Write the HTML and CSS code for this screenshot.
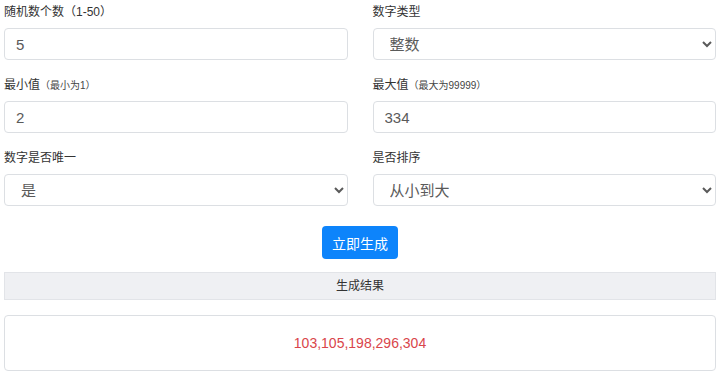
FILE: index.html
```html
<!DOCTYPE html>
<html lang="zh-CN">
<head>
  <meta charset="UTF-8" />
  <meta name="viewport" content="width=device-width, initial-scale=1" />
  <title>随机数生成器</title>
  <link rel="stylesheet" href="styles.css">
</head>
<body>
  <div class="page">
    <form id="randomForm" class="form-grid">
      <div class="field">
        <label for="countInput">随机数个数（1-50）</label>
        <input type="text" id="countInput" value="5" />
      </div>
      <div class="field">
        <label for="typeSelect">数字类型</label>
        <select id="typeSelect">
          <option>整数</option>
          <option>小数</option>
        </select>
      </div>
      <div class="field">
        <label for="minInput">最小值<small>（最小为1）</small></label>
        <input type="text" id="minInput" value="2" />
      </div>
      <div class="field">
        <label for="maxInput">最大值<small>（最大为99999）</small></label>
        <input type="text" id="maxInput" value="334" />
      </div>
      <div class="field">
        <label for="uniqueSelect">数字是否唯一</label>
        <select id="uniqueSelect">
          <option>是</option>
          <option>否</option>
        </select>
      </div>
      <div class="field">
        <label for="sortSelect">是否排序</label>
        <select id="sortSelect">
          <option>从小到大</option>
          <option>从大到小</option>
          <option>不排序</option>
        </select>
      </div>
    </form>

    <div class="actions">
      <button type="button" id="generateBtn">立即生成</button>
    </div>

    <div class="result-title">生成结果</div>
    <div class="result-box" id="result">103,105,198,296,304</div>
  </div>
</body>
</html>
```

FILE: styles.css
```css
body {
  margin: 0;
  font-family: "Liberation Sans", "Noto Sans CJK SC", sans-serif;
  color: #333;
  background: #fff;
}
.page {
  padding: 3px 4px;
}
.form-grid {
  display: grid;
  grid-template-columns: 1fr 1fr;
  column-gap: 25px;
  margin: 0;
}
.field {
  margin-bottom: 16px;
}
.field:nth-last-child(-n+2) {
  margin-bottom: 20px;
}
label {
  display: block;
  height: 18px;
  line-height: 18px;
  margin-bottom: 7px;
  font-size: 12px;
  color: #333;
}
label small {
  font-size: 10px;
  color: #444;
}
input[type="text"], select {
  display: block;
  width: 100%;
  height: 32px;
  padding: 0 11px;
  font-family: "Liberation Sans", "Noto Sans CJK SC", sans-serif;
  font-size: 15px;
  color: #5a5a5a;
  background: #fff;
  border: 1px solid #dcdfe3;
  border-radius: 4px;
  box-sizing: border-box;
  outline: none;
}
select {
  padding-left: 12px;
}
.actions {
  display: flex;
  justify-content: center;
  margin-bottom: 13px;
}
button {
  height: 33px;
  padding: 0 10px;
  font-family: "Liberation Sans", "Noto Sans CJK SC", sans-serif;
  font-size: 14px;
  color: #fff;
  background-color: #0d84fb;
  border: none;
  border-radius: 4px;
  cursor: pointer;
}
button:hover {
  background-color: #0a6fd6;
}
.result-title {
  height: 28px;
  line-height: 26px;
  text-align: center;
  font-size: 12px;
  color: #333;
  background: #eff0f3;
  border: 1px solid #e2e4e8;
  box-sizing: border-box;
  margin-bottom: 15px;
}
.result-box {
  height: 56px;
  line-height: 54px;
  text-align: center;
  font-size: 14px;
  color: #d9454b;
  border: 1px solid #dcdfe3;
  border-radius: 4px;
  box-sizing: border-box;
}
```
